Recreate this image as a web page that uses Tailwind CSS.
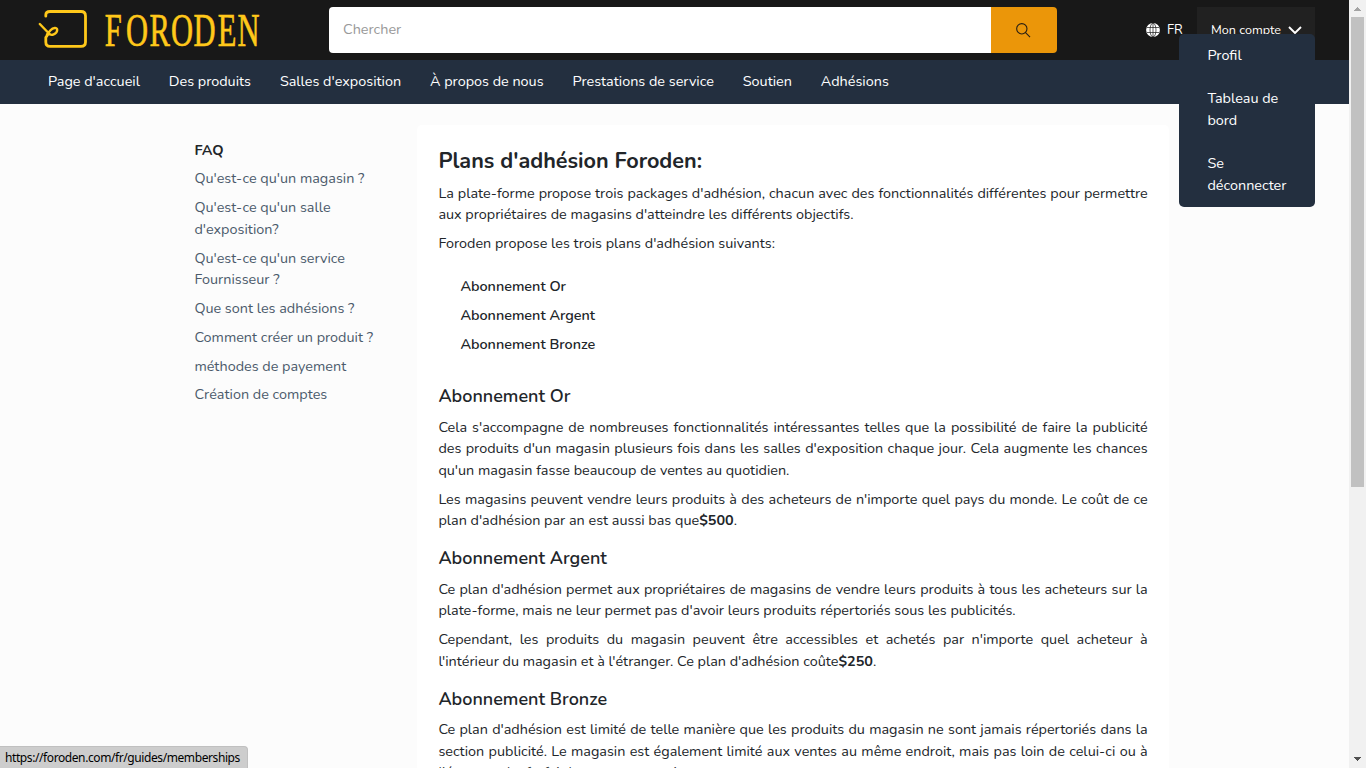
<!DOCTYPE html>
<html lang="fr">
<head>
<meta charset="utf-8">
<title>Foroden - Adhésions</title>
<script src="https://cdn.jsdelivr.net/npm/@tailwindcss/browser@4"></script>
</head>
<body class="h-screen w-[1366px] overflow-hidden bg-[#fcfcfc] font-[Nunito,Lato,sans-serif] text-[14.4px] leading-[21.6px] text-[#212529]">
<div class="flex h-[768px]">
  <div class="relative h-full w-[1349px] overflow-hidden">
    <header class="flex h-[60px] bg-[#181818]">
      <svg class="mt-1 ml-[36px] h-[52px] w-[228px] shrink-0" viewBox="36 4 228 52" fill="none">
        <g stroke="#ffc81a" stroke-linecap="round" stroke-linejoin="round">
          <path d="M45.8 16.2V15Q45.8 11.5 50 11.5H81Q85.5 11.5 85.5 16V42Q85.5 46.4 81 46.4H50Q45.8 46.4 45.8 42V37.5L48.5 33.5" stroke-width="2.8"/>
          <path d="M39.8 24L48.5 33C51 36.8 57 34 57.2 30C57.2 27 53 27.5 50.5 30.3L47 34.5" stroke-width="2.4"/>
        </g>
        <text transform="scale(.65 1)" x="174.3 210.8 245.8 280 314.6 349.2 382.3" y="46" text-anchor="middle" fill="#ffc81a" stroke="#ffc81a" stroke-width=".7" font-family="Liberation Serif, serif" font-size="47">FORODEN</text>
      </svg>
      <div class="mt-[7px] ml-[65px] flex h-[46px] w-[728px] overflow-hidden rounded">
        <div class="flex w-[662px] items-center bg-white pl-[14px] text-[#999]">Chercher</div>
        <div class="flex w-[66px] items-center justify-center bg-[#eb9609] pr-px">
          <svg class="size-[15px]" viewBox="0 0 16 16"><path d="M6.2 .7a5.5 5.5 0 1 0 0 11a5.5 5.5 0 1 0 0-11zM10.2 10.2L15 15" fill="none" stroke="#2a2013" stroke-width="1.2"/></svg>
        </div>
      </div>
      <div class="mt-[7px] ml-[89px] flex h-[46px] items-center text-[13px] text-white">
        <svg class="size-[14px]" viewBox="0 0 14 14"><circle cx="7" cy="7" r="6.9" fill="#fff"/><g fill="none" stroke="#181818" stroke-width=".7"><ellipse cx="7" cy="7" rx="3" ry="6.9"/><path d="M1 4.5H13M1 9.5H13M7 0V14"/></g></svg>
        <span class="ml-[7px] w-[30px] pt-[2px]">FR</span>
      </div>
      <div class="mt-[7px] flex h-[53px] w-[118px] items-start bg-[#212121] pt-[12.4px] pl-[14px] text-[12.6px] text-white">
        <span class="w-[76.5px] whitespace-nowrap">Mon compte</span>
        <svg class="mt-[6.6px] h-[8px] w-[14px]" viewBox="0 0 14 8"><path d="M1 1L7 7L13 1" fill="none" stroke="#fff" stroke-width="1.9"/></svg>
      </div>
    </header>
    <nav class="flex h-[44px] gap-[28.9px] bg-[#232f3f] pt-[11px] pl-[48px] whitespace-nowrap text-white">
      <a>Page d'accueil</a><a>Des produits</a><a>Salles d'exposition</a><a>À propos de nous</a><a>Prestations de service</a><a>Soutien</a><a>Adhésions</a>
    </nav>
    <div class="absolute top-[34px] left-[1179px] flex h-[173px] w-[136px] flex-col gap-[21.6px] rounded-[5px] bg-[#232f3f] pt-[11px] pl-[28.4px] text-white">
      <a>Profil</a><a>Tableau de<br>bord</a><a>Se<br>déconnecter</a>
    </div>
    <main class="flex pt-[21px] pl-[194.4px]">
      <aside class="flex w-[222.4px] shrink-0 flex-col gap-[7.2px] pt-[14.8px] whitespace-nowrap text-[#4b5a6b]">
        <b class="font-bold text-[#212529]">FAQ</b>
        <a class="-mt-[0.5px] mb-[0.5px]">Qu'est-ce qu'un magasin ?</a>
        <a>Qu'est-ce qu'un salle<br>d'exposition?</a>
        <a>Qu'est-ce qu'un service<br>Fournisseur ?</a>
        <a>Que sont les adhésions ?</a>
        <a>Comment créer un produit ?</a>
        <a>méthodes de payement</a>
        <a>Création de comptes</a>
      </aside>
      <article class="h-[700px] w-[752.5px] shrink-0 rounded-[5px] bg-white px-[21.6px] pt-[21.6px]">
        <h1 class="mb-[7.2px] text-[21.6px] leading-[29px] font-bold">Plans d'adhésion Foroden:</h1>
        <p class="mb-[7.2px] text-justify">La plate-forme propose trois packages d'adhésion, chacun avec des fonctionnalités différentes pour permettre aux propriétaires de magasins d'atteindre les différents objectifs.</p>
        <p>Foroden propose les trois plans d'adhésion suivants:</p>
        <ul class="flex flex-col gap-[7.2px] py-[21.6px] pl-[22px] font-semibold"><li>Abonnement Or</li><li>Abonnement Argent</li><li>Abonnement Bronze</li></ul>
        <h2 class="mt-[7.2px] mb-[8.6px] text-[18px] leading-[24px] font-semibold">Abonnement Or</h2>
        <p class="mb-[7.2px] text-justify">Cela s'accompagne de nombreuses fonctionnalités intéressantes telles que la possibilité de faire la publicité des produits d'un magasin plusieurs fois dans les salles d'exposition chaque jour. Cela augmente les chances qu'un magasin fasse beaucoup de ventes au quotidien.</p>
        <p class="text-justify">Les magasins peuvent vendre leurs produits à des acheteurs de n'importe quel pays du monde. Le coût de ce plan d'adhésion par an est aussi bas que<b>$500</b>.</p>
        <h2 class="mt-[14.4px] mb-[8.3px] text-[18px] leading-[24px] font-semibold">Abonnement Argent</h2>
        <p class="mb-[7.2px] text-justify">Ce plan d'adhésion permet aux propriétaires de magasins de vendre leurs produits à tous les acheteurs sur la plate-forme, mais ne leur permet pas d'avoir leurs produits répertoriés sous les publicités.</p>
        <p class="text-justify">Cependant, les produits du magasin peuvent être accessibles et achetés par n'importe quel acheteur à l'intérieur du magasin et à l'étranger. Ce plan d'adhésion coûte<b>$250</b>.</p>
        <h2 class="mt-[14.6px] mb-[8.2px] text-[18px] leading-[24px] font-semibold">Abonnement Bronze</h2>
        <p class="text-justify">Ce plan d'adhésion est limité de telle manière que les produits du magasin ne sont jamais répertoriés dans la section publicité. Le magasin est également limité aux ventes au même endroit, mais pas loin de celui-ci ou à l'étranger. Le forfait bronze est gratuit.</p>
      </article>
    </main>
    <div class="absolute bottom-0 left-0 h-[22px] w-[248px] rounded-tr-[4px] border-t border-r border-[#c0c0c0] bg-[#cdcdcd] pl-[5px] font-['Noto_Sans'] text-[12px] leading-[22px] tracking-[-0.41px] whitespace-nowrap text-black">https://foroden.com/fr/guides/memberships</div>
  </div>
  <div class="flex h-full w-[17px] flex-col items-center bg-[#f1f1f1]">
    <svg class="h-[17px] w-[17px]" viewBox="0 0 17 17" shape-rendering="crispEdges"><path d="M5 11L8.5 7L12 11Z" fill="#a3a3a3"/></svg>
    <div class="h-[470px] w-[13px] bg-[#c1c1c1]"></div>
    <svg class="mt-auto h-[17px] w-[17px]" viewBox="0 0 17 17" shape-rendering="crispEdges"><path d="M5 6H12L8.5 10Z" fill="#505050"/></svg>
  </div>
</div>
</body>
</html>
